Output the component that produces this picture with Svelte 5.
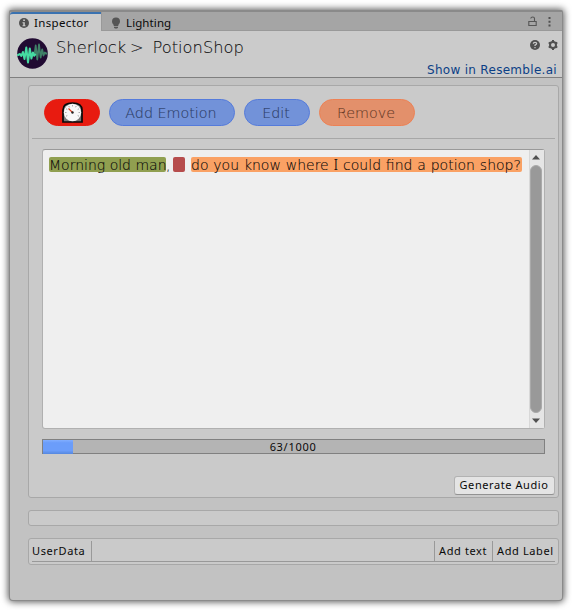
<script>
  const ticks = Array.from({ length: 9 }, (_, i) => i * 30 - 120);
  const count = 63;
  const limit = 1000;
</script>

<div class="page">
  <div class="window">
    <div class="tabs">
      <div class="tab active">
        <svg width="10" height="10" viewBox="0 0 10 10"><circle cx="5" cy="5" r="5" fill="#505050" /><path d="M4.200 1.500h1.700v1.600H4.200zM3.500 4.200h2.300v3h.7v1.100h-3V7.200h.8V5.300h-.8z" fill="#cbcbcb" /></svg>
        <span>Inspector</span>
      </div>
      <div class="tab second">
        <svg width="10" height="12" viewBox="0 0 10 12"><path d="M5 .5a4 4 0 0 0-4 4c0 1.600 1 2.300 1.700 3.400V9h4.600V7.900C8 6.800 9 6.100 9 4.500a4 4 0 0 0-4-4zM3 9.700h4v1L6 11.500H4l-1-.8z" fill="#555" /></svg>
        <span>Lighting</span>
      </div>
      <div class="tools">
        <svg width="9" height="11" viewBox="0 0 9 11"><path d="M.8 5.500h7.400v4H.8zM6.500 5V2.600Q6.500 1 4.700 1 3 1 2.700 2.500" fill="none" stroke="#555" stroke-width="1.100" /></svg>
        <svg width="3" height="11" viewBox="0 0 3 11"><path d="M.5 1h2v2h-2zM.5 4.700h2v2h-2zM.5 8.400h2v2h-2z" fill="#505050" /></svg>
      </div>
    </div>

    <header>
      <svg class="logo" width="31" height="31" viewBox="0 0 31 31">
        <circle cx="15.500" cy="15.500" r="15.300" fill="#210a32" />
        <path d="M14 18l2-3 1.300 3L18.700 7.500l1.600 14L22 6.500l1.600 13 1.600-8 1.300 6 1.300-3 1 1h1.500" fill="none" stroke="#3f8067" stroke-width="1.800" stroke-linejoin="round" />
        <path d="M1 17l2-1 1.300 2 1.600-4 1.600 7L9.300 9.500l1.700 15 1.800-14 1.600 10 1.500-6 1.300 3 1-1" fill="none" stroke="#45dba2" stroke-width="2" stroke-linejoin="round" stroke-linecap="round" />
      </svg>
      <div class="crumbs"><span class="c1">Sherlock</span><span class="c2">&gt;</span><span>PotionShop</span></div>
      <div class="right">
        <div class="icons">
          <svg width="10" height="10" viewBox="0 0 10 10"><circle cx="5" cy="5" r="5" fill="#505050" /><path d="M3.300 3.800q0-1.500 1.700-1.500t1.700 1.300Q6.700 4.700 5 5.200V6M5 7v1.200" fill="none" stroke="#cbcbcb" stroke-width="1.200" /></svg>
          <svg width="10" height="10" viewBox="0 0 10 10"><circle cx="5" cy="5" r="3" fill="none" stroke="#505050" stroke-width="2" /><path d="M5 0v2M5 8v2M.7 2.500l1.700 1M7.600 6.500l1.700 1M.7 7.500l1.700-1M7.600 3.500l1.700-1" stroke="#505050" stroke-width="2" /></svg>
        </div>
        <span class="link">Show in Resemble.ai</span>
      </div>
    </header>

    <main>
      <section class="editor">
        <div class="buttons">
          <div class="pill red">
            <svg width="21" height="21" viewBox="0 0 21 21">
              <path d="M1 20V8Q1 1 10.500 1T20 8v12z" fill="#777" stroke="#090909" stroke-width="1.700" />
              <circle cx="10.500" cy="10.500" r="8.700" fill="#f8f8f8" />
              {#each ticks as angle}
                <path d="M10.500 3v1.500" stroke="#777" stroke-width=".6" transform="rotate({angle} 10.500 10.500)" />
              {/each}
              <path d="M10.500 10.500L6.500 6.500" stroke="#e33719" stroke-width="1.100" />
              <circle cx="10.500" cy="10.500" r="1.200" fill="#222" />
            </svg>
          </div>
          <div class="pill blue add"><span>Add Emotion</span></div>
          <div class="pill blue edit"><span>Edit</span></div>
          <div class="pill orange"><span>Remove</span></div>
        </div>
        <div class="textbox">
          <div class="copy"><mark class="green">Morning old man</mark><span class="comma">,</span><mark class="pause"></mark><mark class="peach">do you know where <span class="serif-i">I</span> could find a potion shop?</mark></div>
          <div class="scroll">
            <svg width="8" height="5" viewBox="0 0 8 5"><path d="M0 4.500L4 0l4 4.500z" fill="#505050" /></svg>
            <div class="thumb"></div>
            <svg width="8" height="5" viewBox="0 0 8 5"><path d="M0 .5h8L4 5z" fill="#505050" /></svg>
          </div>
        </div>
        <div class="progress">
          <div class="fill" style="width: {count / limit * 100 - 0.300}%"></div>
          <span>{count}/{limit}</span>
        </div>
        <button><span>Generate Audio</span></button>
      </section>
      <section class="empty"></section>
      <section class="userdata">
        <div class="row">
          <div class="name"><span>UserData</span></div>
          <div class="cell text"><span>Add text</span></div>
          <div class="cell label"><span>Add Label</span></div>
        </div>
      </section>
    </main>
  </div>
</div>

<style>
  :global(body) { background: #fff; }
  * { box-sizing: border-box; }
  svg { display: block; flex: none; }
  .page { width: 572px; height: 610px; padding: 10px 9px 9px 9px; overflow: hidden; font: 11px/14px "Noto Sans", sans-serif; color: #090909; }
  .window { width: 554px; height: 591px; display: flex; flex-direction: column; background: #c2c2c2; border: 1px solid #8a8a8a; border-top-width: 2px; border-radius: 2px 2px 4px 4px; box-shadow: 0 0 7px 1px rgba(0,0,0,.65); }
  span, mark { white-space: pre; }
  .tabs { height: 19px; flex: none; display: flex; background: #a5a5a5; border-bottom: 1px solid #999; }
  .tab { display: flex; align-items: center; height: 18px; font-size: 11.500px; letter-spacing: .35px; }
  .active { width: 91px; height: 19px; padding: 1px 0 0 9px; gap: 5px; background: #cbcbcb; border-top: 2px solid #3a72b0; border-radius: 3px 0 0; }
  .second { padding: 3px 0 0 9px; gap: 5px; border-left: 1px solid #999; letter-spacing: .1px; }
  .tools { margin-left: auto; display: flex; gap: 11px; padding: 4px 11px 0 0; }
  header { height: 47px; flex: none; display: flex; background: #cbcbcb; border-bottom: 1px solid #7f7f7f; }
  .logo { margin: 7px 0 0 7px; }
  .crumbs, .pill, .copy { font-family: "DejaVu Sans", sans-serif; font-weight: 200; -webkit-text-stroke: .1px currentColor; }
  .crumbs { display: flex; margin: 6px 0 0 8px; font-size: 16.300px; line-height: 22px; color: #111; }
  .c1 { width: 74px; }
  .c2 { width: 22.500px; }
  .right { margin-left: auto; display: flex; flex-direction: column; align-items: flex-end; }
  .icons { display: flex; gap: 8px; padding: 9px 4px 0 0; }
  .link { margin: 10px 5px 0 0; font-family: "DejaVu Sans", sans-serif; font-size: 12px; line-height: 20px; letter-spacing: .3px; color: #0b3f86; }
  main { padding: 7px 3px 0 18px; display: flex; flex-direction: column; }
  section { background: #cacaca; border: 1px solid #a8a8a8; border-radius: 3px; }
  .editor { height: 413px; padding: 13px 3px 0; display: flex; flex-direction: column; }
  .buttons { height: 40px; padding: 0 12px; display: flex; align-items: flex-start; gap: 9px; border-bottom: 1px solid #a7a7a7; }
  .pill { height: 27px; display: flex; justify-content: center; align-items: center; border-radius: 14px; border: 1px solid; font-size: 14.300px; }
  .pill span { margin-right: 2px; }
  .red { width: 56px; background: #e81b10; border-color: #e81b10; }
  .blue { background: #7292d9; border-color: #557bdb; color: #2b3c64; }
  .add { width: 126px; }
  .edit { width: 66px; }
  .orange { width: 96px; background: #e3906b; border-color: #ed8155; color: #683b28; }
  .textbox { margin: 10px 10px 0; height: 280px; display: flex; background: #efefef; border: 1px solid #b0b0b0; border-top-color: #999; border-radius: 3px; }
  .copy { flex: 1; display: flex; align-items: flex-start; padding: 7px 0 0 6px; font-size: 14px; line-height: 16px; color: #080808; }
  .serif-i { font-family: "Noto Sans", sans-serif; font-size: 15px; font-weight: 300; line-height: 1px; }
  mark { height: 15px; color: inherit; border-radius: 2px; }
  .green { width: 117px; background: #909f50; }
  .comma { width: 7px; }
  .pause { width: 12px; background: #b64c4c; }
  .peach { width: 331px; margin-left: 6px; background: #faa164; word-spacing: .4px; }
  .scroll { width: 15px; display: flex; flex-direction: column; align-items: center; padding: 5px 3px 5px 0; border-left: 1px solid #d8d8d8; background: #e5e5e5; }
  .thumb { flex: 1; margin: 5px 0; width: 12px; background: #999; border: 1px solid #aaa; border-radius: 6px; }
  .progress { height: 15px; margin: 10px 10px 0; display: grid; background: #b4b4b4; border: 1px solid #808080; }
  .fill, .progress span { grid-area: 1 / 1; }
  .fill { background: linear-gradient(#82afff 0, #6b9dfa 20%, #6b9dfa 75%, #5688df); }
  .progress span { justify-self: center; line-height: 14px; letter-spacing: .7px; margin-right: 1px; }
  button { align-self: flex-end; width: 101px; height: 19px; margin: 22px 0 0; padding: 0 1px 2px 0; font: inherit; letter-spacing: .58px; color: #090909; background: #e4e4e4; border: 1px solid #b2b2b2; border-bottom-color: #929292; border-radius: 3px; }
  .empty { height: 16px; margin-top: 12px; }
  .userdata { height: 27px; margin-top: 12px; padding: 2px 3px; }
  .row { height: 21px; display: flex; border-bottom: 1px solid #999; letter-spacing: .62px; line-height: 19px; }
  .name { flex: 1; }
  .name span { display: block; width: 60px; height: 20px; border-right: 1px solid #999; }
  .cell { border-left: 1px solid #999; padding-left: 4px; }
  .text { width: 58px; }
  .label { width: 63px; }
</style>
